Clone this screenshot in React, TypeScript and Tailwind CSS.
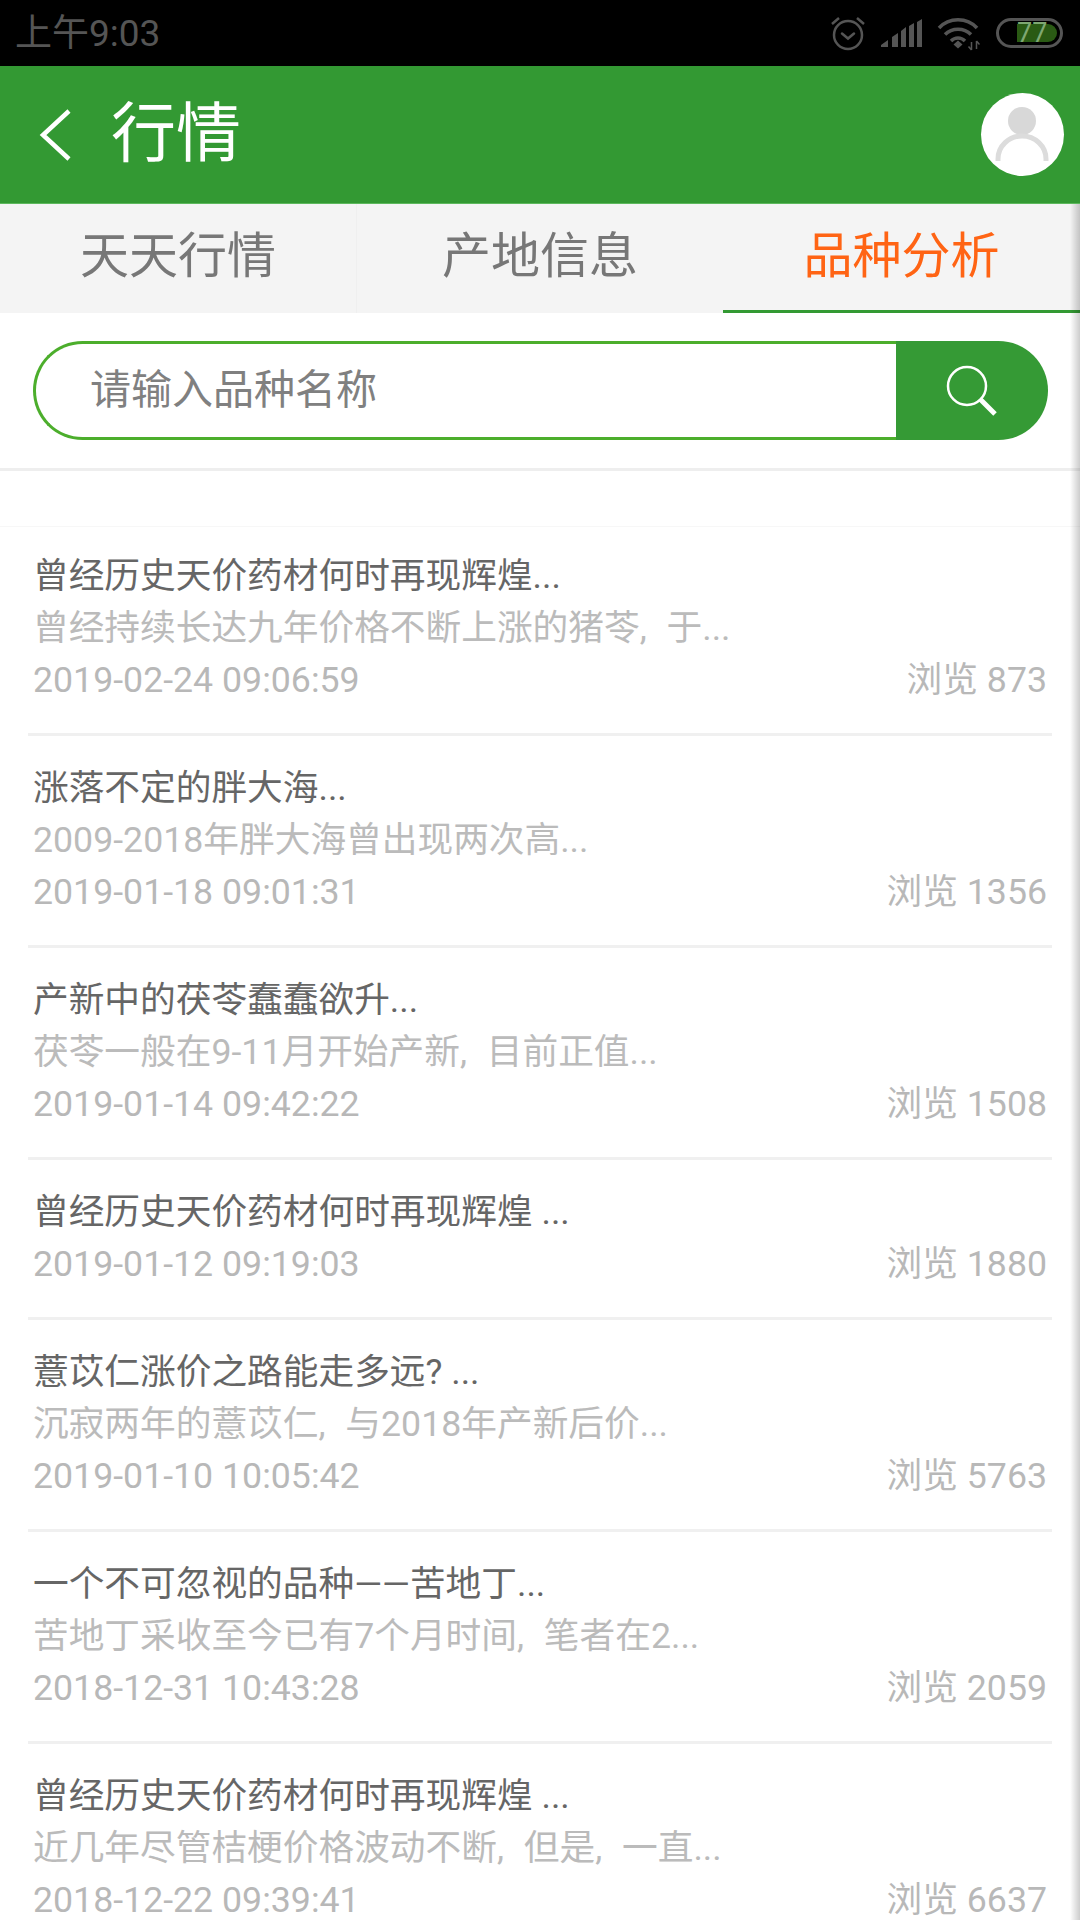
const articles = [
  { title: "曾经历史天价药材何时再现辉煌...", desc: "曾经持续长达九年价格不断上涨的猪苓, 于...", date: "2019-02-24 09:06:59", views: 873 },
  { title: "涨落不定的胖大海...", desc: "2009-2018年胖大海曾出现两次高...", date: "2019-01-18 09:01:31", views: 1356 },
  { title: "产新中的茯苓蠢蠢欲升...", desc: "茯苓一般在9-11月开始产新, 目前正值...", date: "2019-01-14 09:42:22", views: 1508 },
  { title: "曾经历史天价药材何时再现辉煌 ...", desc: "", date: "2019-01-12 09:19:03", views: 1880 },
  { title: "薏苡仁涨价之路能走多远? ...", desc: "沉寂两年的薏苡仁, 与2018年产新后价...", date: "2019-01-10 10:05:42", views: 5763 },
  { title: "一个不可忽视的品种——苦地丁...", desc: "苦地丁采收至今已有7个月时间, 笔者在2...", date: "2018-12-31 10:43:28", views: 2059 },
  { title: "曾经历史天价药材何时再现辉煌 ...", desc: "近几年尽管桔梗价格波动不断, 但是, 一直...", date: "2018-12-22 09:39:41", views: 6637 },
];

function StatusIcons() {
  return (
    <div className="flex items-center">
      <svg width="36" height="36" viewBox="0 0 36 36" fill="none" stroke="#555" strokeWidth="2.5">
        <circle cx="18" cy="20" r="14" />
        <path d="M12 18.5l6 5 6-5" strokeLinecap="round" />
        <path d="M2 9l7-6M34 9l-7-6" />
      </svg>
      <svg className="ml-[15px]" width="41" height="28" viewBox="0 0 41 28" fill="#555">
        <path d="M0 28v-2l7-5v7zM11 28V18l6-4v14zM20 28V12l5-4v20zM28 28V7l5-3v24zM36 28V3l5-3v28z" />
      </svg>
      <svg className="ml-[15px]" width="43" height="35" viewBox="0 0 43 35" fill="none" stroke="#555" strokeWidth="3.500">
        <path d="M2 12C12 1 30 1 40 12" />
        <path d="M8 18.500c7-7 19-7 26 0" />
        <path d="M14 25c4-4 10-4 14 0" />
        <path d="M21 24.500l4.500 4-4.500 4-4.500-4z" fill="#555" stroke="none" />
        <path d="M34.500 26v8M31.500 30.500l3 3.500M39.500 33v-8M39.500 25l3 3.500" strokeWidth="1.500" />
      </svg>
      <div className="ml-[16px] w-[67px] h-[30px] rounded-full border-[3px] border-[#555] p-[3px] flex">
        <div className="w-[44px] ml-[15px] rounded-r-full rounded-l-[2px] bg-[#2a5a14] relative flex items-center">
          <span className="absolute left-0 text-[#7fa873] text-[27px] leading-none font-['Roboto',sans-serif]">77</span>
        </div>
      </div>
    </div>
  );
}

function Avatar() {
  return (
    <div className="w-[83px] h-[83px] rounded-full bg-white overflow-hidden">
      <svg width="83" height="83" viewBox="0 0 83 83" fill="none">
        <circle cx="41" cy="28" r="14" fill="#d8d8d8" />
        <path d="M17 68v-2c0-13 11-23 24-23s24 10 24 23v2" stroke="#dcdcdc" strokeWidth="5" />
      </svg>
    </div>
  );
}

function Article({ item, first }: { item: (typeof articles)[number]; first: boolean }) {
  return (
    <div className={`mx-[28px] border-b-[3px] border-[#f0f0f0] ${first ? "pt-[23px]" : "pt-[26px]"} pb-[27px]`}>
      <div className="pl-[5px] pr-[5px] text-[35.7px] leading-[52px]">
        <div className="text-[#666666] whitespace-nowrap">{item.title}</div>
        {item.desc && <div className="text-[#bbbbbb] whitespace-nowrap [word-spacing:11px]">{item.desc}</div>}
        <div className="flex justify-between text-[#b8b8b8]">
          <span>{item.date}</span>
          <span>浏览 {item.views}</span>
        </div>
      </div>
    </div>
  );
}

export default function App() {
  return (
    <div className="relative w-[1080px] h-[1920px] overflow-hidden bg-white font-['Roboto','Noto_Sans_CJK_SC',sans-serif]">
      {/* status bar */}
      <div className="h-[66px] bg-black flex items-center justify-between pl-[15px] pr-[17px]">
        <span className="text-[#555555] text-[37px] leading-none">上午9:03</span>
        <StatusIcons />
      </div>

      {/* title bar */}
      <div className="h-[138px] bg-[#339933] border-b border-[#5cb85c] flex items-center justify-between pl-[36px] pr-[16px]">
        <div className="flex items-center">
          <svg width="38" height="54" viewBox="0 0 38 54" fill="none" stroke="#fff" strokeWidth="4.500">
            <path d="M33 3L7 27l26 24" />
          </svg>
          <span className="ml-[37px] text-[65px] leading-none text-white">行情</span>
        </div>
        <Avatar />
      </div>

      {/* tabs */}
      <div className="h-[109px] bg-[#f4f4f4] flex text-[49px] text-[#777777]">
        <div className="w-[357px] border-r border-[#efefef] flex items-center justify-center pb-[4px]">天天行情</div>
        <div className="w-[366px] flex items-center justify-center pb-[4px]">产地信息</div>
        <div className="flex-1 border-b-[3px] border-[#339933] flex items-center justify-center pb-[1px] text-[#ff6414]">品种分析</div>
      </div>

      {/* search */}
      <div className="h-[158px] border-b-[3px] border-[#eeeeee] pt-[28px] px-[33px] pr-[32px]">
        <div className="flex h-[99px]">
          <div className="flex-1 rounded-l-[50px] border-[3px] border-r-0 border-[#4cae2c] pl-[54px] flex items-center text-[41px] text-[#808080]">
            请输入品种名称
          </div>
          <div className="w-[152px] rounded-r-[50px] bg-[#359a35] flex items-center justify-center">
            <svg width="52" height="52" viewBox="0 0 52 52" fill="none" stroke="#fff">
              <circle cx="21" cy="21" r="19" strokeWidth="2.500" />
              <path d="M34 34l15 15" strokeWidth="5" />
            </svg>
          </div>
        </div>
      </div>

      <div className="h-[56px] border-b border-[#f7f7f7]" />

      {/* list */}
      {articles.map((item, i) => (
        <Article key={item.date} item={item} first={i === 0} />
      ))}

      {/* page edge shadow */}
      <div className="absolute top-[204px] right-0 bottom-0 w-[10px] bg-gradient-to-r from-transparent to-[#00000033]" />
    </div>
  );
}
